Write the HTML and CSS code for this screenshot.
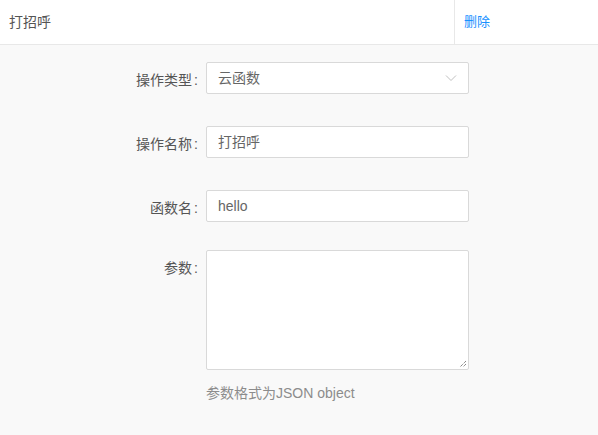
FILE: index.html
```html
<!DOCTYPE html>
<html lang="zh">
<head>
<meta charset="utf-8">
<link rel="stylesheet" href="styles.css">
</head>
<body>
<div class="page">
  <div class="header">
    <div class="title">打招呼</div>
    <div class="actions"><a class="del">删除</a></div>
  </div>
  <div class="form">
    <div class="row">
      <div class="label">操作类型<span class="colon">:</span></div>
      <div class="control">
        <div class="select">
          <span>云函数</span>
          <svg class="arrow" width="12" height="8" viewBox="0 0 12 8"><path d="M1 1.5 L6 6.5 L11 1.5" fill="none" stroke="#c0c0c0" stroke-width="1"/></svg>
        </div>
      </div>
    </div>
    <div class="row">
      <div class="label">操作名称<span class="colon">:</span></div>
      <div class="control"><div class="input">打招呼</div></div>
    </div>
    <div class="row">
      <div class="label">函数名<span class="colon">:</span></div>
      <div class="control"><div class="input">hello</div></div>
    </div>
    <div class="row row-area">
      <div class="label">参数<span class="colon">:</span></div>
      <div class="control">
        <div class="textarea">
          <svg class="grip" width="9" height="9" viewBox="0 0 9 9"><path d="M8 2 L2 8 M8 5 L5 8" stroke="#555" stroke-width="1" stroke-dasharray="1 1" fill="none"/></svg>
        </div>
        <div class="help">参数格式为JSON object</div>
      </div>
    </div>
  </div>
</div>
</body>
</html>
```
FILE: styles.css
```css
* { box-sizing: border-box; }
html, body { margin: 0; padding: 0; }
body {
  font-family: "Liberation Sans", "Noto Sans CJK SC", sans-serif;
  font-size: 14px;
  color: #595959;
  background: #f9f9f9;
  width: 598px;
  height: 435px;
  overflow: hidden;
}
.header {
  display: flex;
  height: 45px;
  background: #fff;
  border-bottom: 1px solid #e8e8e8;
}
.title {
  flex: 0 0 455px;
  padding-left: 9px;
  line-height: 44px;
  font-size: 14px;
  color: #555;
  border-right: 1px solid #e8e8e8;
}
.actions {
  flex: 1;
  padding-left: 9px;
  line-height: 44px;
  font-size: 13px;
}
.del { color: #1890ff; }
.form {
  padding-top: 17px;
}
.row {
  display: flex;
  margin-bottom: 32px;
}
.row-area { margin-top: -4px; }
.label {
  flex: 0 0 206px;
  text-align: right;
  height: 32px;
  line-height: 30px;
  padding-top: 3px;
  color: #555;
}
.colon {
  margin: 0 8px 0 2px;
}
.control { width: 263px; }
.select, .input {
  height: 32px;
  background: #fff;
  border: 1px solid #d9d9d9;
  border-radius: 2px;
  padding: 0 11px;
  line-height: 30px;
  color: #666;
}
.select {
  display: flex;
  justify-content: space-between;
  align-items: center;
}
.textarea {
  height: 120px;
  background: #fff;
  border: 1px solid #d9d9d9;
  border-radius: 2px;
  display: flex;
  align-items: flex-end;
  justify-content: flex-end;
  padding: 0 1px 1px 0;
}
.help {
  margin-top: 12px;
  line-height: 22px;
  color: #8c8c8c;
}
```
